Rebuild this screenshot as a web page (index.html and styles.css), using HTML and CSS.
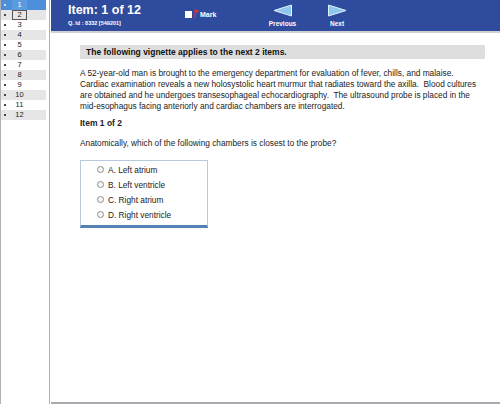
FILE: index.html
```html
<!DOCTYPE html>
<html>
<head>
<meta charset="utf-8">
<link rel="stylesheet" href="styles.css">
</head>
<body>
<div class="app">
  <aside class="sidebar">
    <ul class="qlist">
      <li class="row current"><span class="dot"></span><span class="num">1</span></li>
      <li class="row alt"><span class="dot"></span><span class="num boxed">2</span></li>
      <li class="row"><span class="dot"></span><span class="num">3</span></li>
      <li class="row alt"><span class="dot"></span><span class="num">4</span></li>
      <li class="row"><span class="dot"></span><span class="num">5</span></li>
      <li class="row alt"><span class="dot"></span><span class="num">6</span></li>
      <li class="row"><span class="dot"></span><span class="num">7</span></li>
      <li class="row alt"><span class="dot"></span><span class="num">8</span></li>
      <li class="row"><span class="dot"></span><span class="num">9</span></li>
      <li class="row alt"><span class="dot"></span><span class="num">10</span></li>
      <li class="row"><span class="dot"></span><span class="num">11</span></li>
      <li class="row alt"><span class="dot"></span><span class="num">12</span></li>
    </ul>
  </aside>
  <main class="main">
    <header class="topbar">
      <div class="itemInfo">
        <div class="itemTitle">Item: 1 of 12</div>
        <div class="qid">Q. Id : 8332 [549201]</div>
      </div>
      <div class="mark">
        <span class="checkbox"></span>
        <svg class="flag" width="6" height="9" viewBox="0 0 6 9"><path d="M1 0.5 V9" stroke="#e33" stroke-width="1"/><path d="M1.5 0.5 L5.5 2.2 L1.5 4 Z" fill="#e33"/></svg>
        <span class="markText">Mark</span>
      </div>
      <div class="navBtn prev">
        <svg width="20" height="13" viewBox="0 0 20 13"><path d="M1 6.5 L18.5 1 L18.5 12 Z" fill="#8fc8ee" stroke="#dff0fb" stroke-width="1"/></svg>
        <span>Previous</span>
      </div>
      <div class="navBtn next">
        <svg width="20" height="13" viewBox="0 0 20 13"><path d="M19 6.5 L1.5 1 L1.5 12 Z" fill="#8fc8ee" stroke="#dff0fb" stroke-width="1"/></svg>
        <span>Next</span>
      </div>
    </header>
    <section class="content">
      <div class="vignetteHead">The following vignette applies to the next 2 items.</div>
      <p class="stem">A 52-year-old man is brought to the emergency department for evaluation of fever, chills, and malaise.<br>Cardiac examination reveals a new holosystolic heart murmur that radiates toward the axilla.&nbsp; Blood cultures<br>are obtained and he undergoes transesophageal echocardiography.&nbsp; The ultrasound probe is placed in the<br>mid-esophagus facing anteriorly and cardiac chambers are interrogated.</p>
      <div class="itemOf">Item 1 of 2</div>
      <p class="question">Anatomically, which of the following chambers is closest to the probe?</p>
      <div class="answers">
        <div class="opt"><span class="radio"></span>A. Left atrium</div>
        <div class="opt"><span class="radio"></span>B. Left ventricle</div>
        <div class="opt"><span class="radio"></span>C. Right atrium</div>
        <div class="opt"><span class="radio"></span>D. Right ventricle</div>
      </div>
    </section>
  </main>
</div>
</body>
</html>
```
FILE: styles.css
```css
* { box-sizing: border-box; }
html, body { margin: 0; padding: 0; }
body {
  width: 500px;
  height: 404px;
  overflow: hidden;
  font-family: "Liberation Sans", Arial, sans-serif;
  background: #fff;
  color: #222;
}
.app {
  display: flex;
  height: 404px;
}
.sidebar {
  width: 50px;
  flex: none;
  border-left: 1px solid #b0b0b0;
  border-right: 1px solid #b0b0b0;
  margin-right: 1px;
}
.qlist {
  list-style: none;
  margin: 0;
  padding: 0;
  width: 45px;
}
.row {
  height: 10px;
  display: flex;
  align-items: center;
  font-size: 7.5px;
  color: #222;
}
.row.alt { background: #e6e6e6; }
.row.current { background: #4d8fd8; color: #fff; }
.dot {
  width: 2px;
  height: 2px;
  background: #444;
  margin-left: 3px;
  margin-right: 6px;
}
.row.current .dot { background: #cfe2f7; }
.num {
  width: 15px;
  height: 10px;
  line-height: 10px;
  text-align: center;
}
.num.boxed { border: 1px solid #555; line-height: 8px; }
.row.current .num { background: #5b9be0; }

.main {
  flex: 1;
  display: flex;
  flex-direction: column;
  border-bottom: 2px solid #a8aab0;
}
.topbar {
  height: 33px;
  flex: none;
  background: #2f4b9e;
  border-bottom: 2px solid #cfd0d4;
  display: flex;
  align-items: flex-start;
  color: #fff;
  font-weight: bold;
}
.itemInfo {
  padding-left: 17px;
  padding-top: 3px;
  width: 134px;
}
.itemTitle { font-size: 12.5px; line-height: 14px; }
.qid { font-size: 5.5px; line-height: 8px; margin-top: 2px; }
.mark {
  display: flex;
  align-items: flex-end;
  padding-top: 9px;
  width: 80px;
}
.checkbox {
  width: 7px;
  height: 7px;
  background: #fff;
  margin-right: 2px;
}
.markText { font-size: 7px; line-height: 7px; }
.navBtn {
  display: flex;
  flex-direction: column;
  align-items: center;
  padding-top: 4px;
  font-size: 6.5px;
}
.navBtn span { margin-top: 3px; }
.prev { width: 35px; }
.next { width: 30px; margin-left: 22px; }

.content {
  padding: 12px 15px 0 29px;
}
.vignetteHead {
  background: #dedede;
  height: 14px;
  line-height: 14px;
  padding-left: 6px;
  font-size: 8.5px;
  font-weight: bold;
  color: #111;
}
.stem {
  margin: 8.5px -14px 0 0;
  font-size: 8.3px;
  line-height: 11.3px;
  color: #222;
  white-space: nowrap;
}
.itemOf {
  margin-top: 5.5px;
  font-size: 8.5px;
  font-weight: bold;
  line-height: 10px;
}
.question {
  margin: 10px 0 0 0;
  font-size: 8.3px;
  line-height: 10px;
}
.answers {
  margin-top: 12px;
  width: 128px;
  border: 1px solid #b7c9dc;
  border-bottom: 3px solid #5282b4;
  padding: 1px 0 3px 16px;
}
.opt {
  height: 15px;
  display: flex;
  align-items: center;
  font-size: 8.3px;
  color: #222;
}
.radio {
  width: 7px;
  height: 7px;
  border: 1px solid #888;
  border-radius: 50%;
  margin-right: 4px;
  background: #fafafa;
}
```
